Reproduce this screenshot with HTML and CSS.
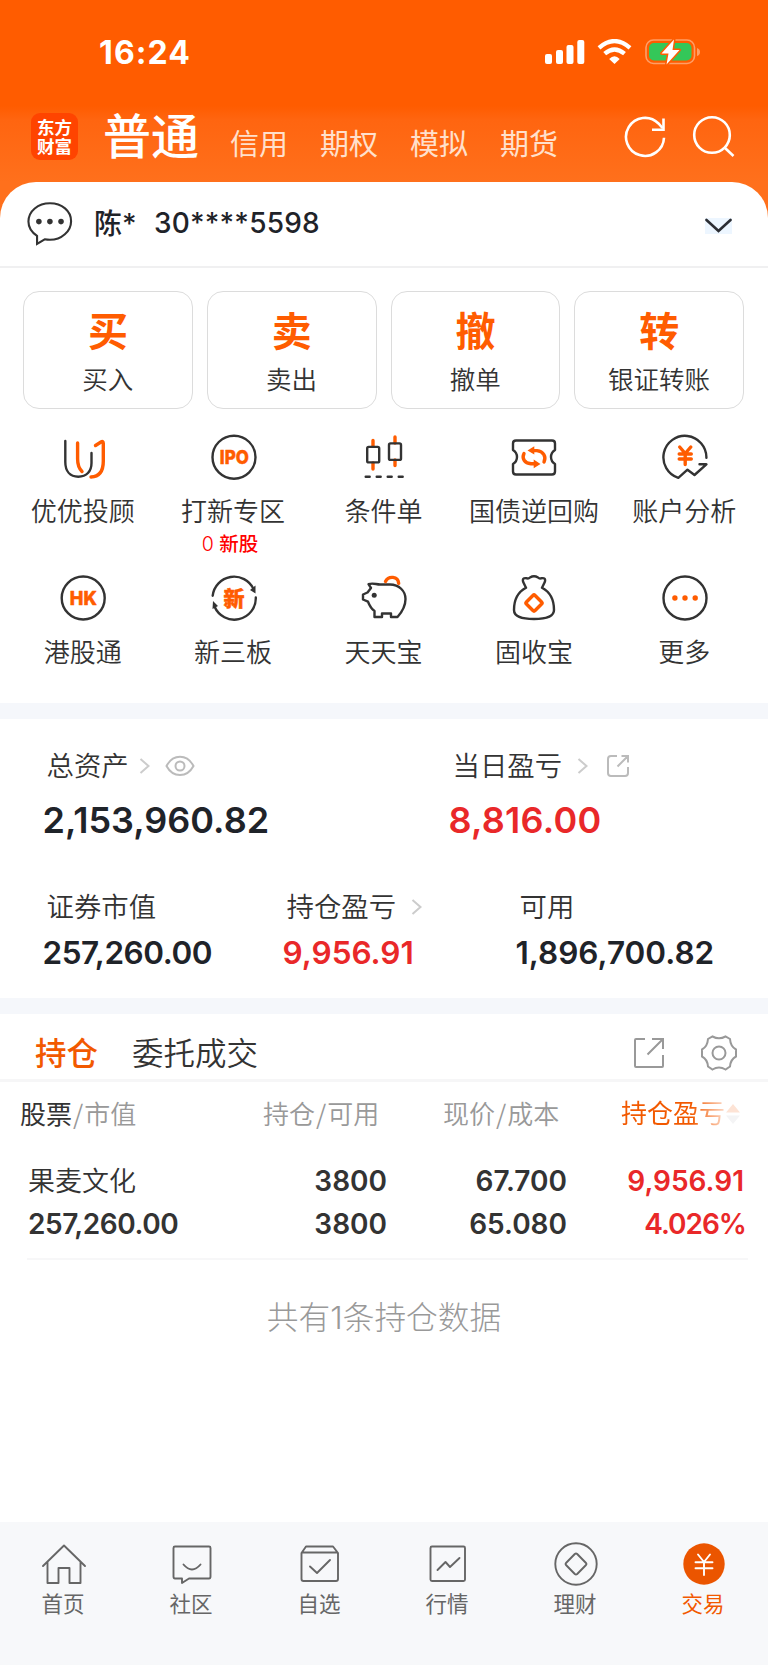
FILE: index.html
```html
<!DOCTYPE html>
<html lang="zh-CN">
<head>
  <meta charset="UTF-8">
  <meta name="viewport" content="width=device-width, initial-scale=1">
  <title>交易</title>
  <link rel="stylesheet" href="styles.css">
</head>
<body>
  <header>
    <div class="status-bar">
      <span class="time">16:24</span>
      <svg class="status-icons" width="156" height="26" viewBox="0 0 156 26">
        <g fill="#fff">
          <rect x="0" y="15" width="7" height="10" rx="2"/>
          <rect x="11" y="11" width="7" height="14" rx="2"/>
          <rect x="21.500" y="6" width="7" height="19" rx="2"/>
          <rect x="32.300" y="1" width="7" height="24" rx="2"/>
          <path d="M64.200 20 Q69.500 14.500 74.700 20 L69.500 25 Z"/>
        </g>
        <g fill="none" stroke="#fff" stroke-width="4.300">
          <path d="M54 8.800 Q69.500 -4.600 85 8.800"/>
          <path d="M59.700 14.700 Q69.500 6.300 79.500 14.700"/>
        </g>
        <rect x="101" y="1" width="48.500" height="23.500" rx="7.500" fill="none" stroke="#ff9e66" stroke-width="1.600"/>
        <path d="M152 9 Q155 10 155 13 Q155 16 152 17 Z" fill="#ff9e66"/>
        <rect x="104" y="4" width="42.500" height="17.500" rx="5" fill="#34c759"/>
        <path d="M129 .5 L116.500 14.500 H123.500 L121.500 25.500 L134.500 11 H127.500 Z" fill="#fff" stroke="#ff5c00" stroke-width="3" paint-order="stroke" stroke-linejoin="round"/>
      </svg>
    </div>
    <nav class="account-tabs">
      <div class="logo"><span>东方</span><span>财富</span></div>
      <a class="current" href="#">普通</a>
      <a href="#">信用</a>
      <a href="#">期权</a>
      <a href="#">模拟</a>
      <a href="#">期货</a>
      <svg class="header-icons" width="112" height="44" viewBox="0 0 112 44" fill="none" stroke="#fff" stroke-width="2.600">
        <path d="M41 22.700 A19 19 0 1 1 35.500 8.500 L39.500 13"/>
        <path d="M40.500 3.500 V14.700 H29"/>
        <circle cx="89" cy="20" r="17.800"/>
        <path d="M101.500 32.500 L110.500 41"/>
      </svg>
    </nav>
  </header>

  <main>
    <div class="account">
      <svg width="46" height="46" viewBox="0 0 48 48">
        <path d="M10.500 36.500 C4.500 32.500 1.500 27 1.500 21.500 C1.500 10.500 11.500 2.300 24 2.300 C36.500 2.300 46 10.500 46 21 C46 31.500 36 40.500 24 40.500 Q21 40.500 18.500 40 L10.500 44.700 Z" fill="none" stroke="#333" stroke-width="2.200"/>
        <g fill="#333"><circle cx="12.400" cy="21.500" r="2.900"/><circle cx="23.900" cy="21.500" r="2.900"/><circle cx="35.500" cy="21.500" r="2.900"/></g>
      </svg>
      <span class="owner">陈*</span>
      <span class="number">30****5598</span>
      <svg class="expand" width="27" height="16" viewBox="0 0 27 16">
        <path d="M1.500 2 L13.500 13 L25.500 2" fill="none" stroke="#2b2d33" stroke-width="2.600" stroke-linecap="round"/>
      </svg>
    </div>

    <div class="trade-cards">
      <a href="#"><b>买</b><span>买入</span></a>
      <a href="#"><b>卖</b><span>卖出</span></a>
      <a href="#"><b>撤</b><span>撤单</span></a>
      <a href="#"><b>转</b><span>银证转账</span></a>
    </div>

    <div class="shortcuts">
      <a href="#">
        <svg class="icon" viewBox="0 0 48 48">
          <path d="M6.300 8 V29 C6.300 38 11 43.700 19.300 43.700 C27.500 43.700 32.500 38.500 32.500 30 V20"/>
          <path class="hot" d="M18.600 10 V26 C18.600 32 20 35.500 23 38.500 M36.500 12.500 L42 9 Q44.300 7.600 44.300 10.500 V28 C44.300 37.500 41 43.700 32 44"/>
        </svg>
        <span>优优投顾</span>
      </a>
      <a href="#">
        <svg class="icon" viewBox="0 0 48 48">
          <circle cx="24" cy="24.200" r="21.500"/>
          <text x="24.300" y="31.300" textLength="29" lengthAdjust="spacingAndGlyphs">IPO</text>
        </svg>
        <span>打新专区</span>
        <em>0 <b>新股</b></em>
      </a>
      <a href="#">
        <svg class="icon" viewBox="0 0 48 48">
          <path class="hot" d="M13 7.500 V13 M13 30 V36 M35 4 V10 M35 27 V32.500"/>
          <rect x="7.200" y="13.900" width="12" height="15.500" rx="1.500"/>
          <rect x="29" y="10.400" width="12" height="16.500" rx="1.500"/>
          <path d="M5.700 43.700 H9.700 M16.700 43.700 H20.700 M27.700 43.700 H31.700 M38.700 43.700 H42.700"/>
        </svg>
        <span>条件单</span>
      </a>
      <a href="#">
        <svg class="icon" viewBox="0 0 48 48">
          <path d="M6 7.500 H42 Q45 7.500 45 10.500 V17 Q41 19.500 41 24 Q41 28.500 45 31 V38.500 Q45 41.500 42 41.500 H6 Q3 41.500 3 38.500 V31 Q7 28.500 7 24 Q7 19.500 3 17 V10.500 Q3 7.500 6 7.500 Z"/>
          <path class="hot" d="M23 17.600 H27 C33.500 18.500 36.500 23.500 34 29 M24 30.800 H21 C14.500 30 11.500 25.500 14 20.500"/>
          <path class="hot-fill" d="M17.500 17.400 L24.300 13.200 V21.600 Z M30.500 31 L23.700 26.600 V35.200 Z"/>
        </svg>
        <span>国债逆回购</span>
      </a>
      <a href="#">
        <svg class="icon" viewBox="0 0 48 48">
          <path d="M45.400 24.700 A21.500 21.500 0 1 0 17.300 44.800 L26.500 36.700 L33.500 42 L45.400 31.300 H38.500"/>
          <path class="hot" d="M18.700 14 L24.200 20.500 L29.800 14 M18.200 21 H30.300 M18.200 26 H30.300 M24.200 21 V31.500"/>
        </svg>
        <span>账户分析</span>
      </a>
      <a href="#">
        <svg class="icon" viewBox="0 0 48 48">
          <circle cx="24.200" cy="24" r="21.500"/>
          <text x="24.300" y="31" textLength="27" lengthAdjust="spacingAndGlyphs">HK</text>
        </svg>
        <span>港股通</span>
      </a>
      <a href="#">
        <svg class="icon" viewBox="0 0 48 48">
          <path d="M2.700 21.700 A21.500 21.500 0 0 1 43.500 15 M45.800 23.500 A21.500 21.500 0 0 1 4.500 32.500"/>
          <path class="dark-fill" d="M40 16 L45.500 11.500 V19.500 Z M2.500 35 L3 27 L8 32 Z"/>
          <text class="cjk" x="24" y="31.800">新</text>
        </svg>
        <span>新三板</span>
      </a>
      <a href="#">
        <svg class="icon" viewBox="0 0 48 48">
          <path d="M8.500 10.200 C13 8.500 16 10.500 20 10.500 H30 C39 10.500 45.500 17 45.500 25 C45.500 33 42 38 37.500 43 H31 V39.500 H22 V43 H14.500 V37 C11 34.500 9.500 31.500 8 27.700 L3 25.500 V20.500 L7.500 18.500 L11 14 Z"/>
          <circle class="dark-fill" cx="14.200" cy="21.300" r="2.500"/>
          <path class="hot" d="M25.500 7.500 C28.500 1.500 38 2 38.700 9.300"/>
        </svg>
        <span>天天宝</span>
      </a>
      <a href="#">
        <svg class="icon" viewBox="0 0 48 48">
          <path d="M16 13.800 L13.200 8 Q11.800 3.500 16.500 4.200 Q18.500 5 20 3.500 Q24 1 28 3.500 Q29.500 5 31.500 4.200 Q36.200 3.500 34.800 8 L32 13.800 C40 18 44 25 44 36 C44 42.500 37 45 24 45 C11 45 4 42.500 4 36 C4 25 8 18 16 13.800 Z"/>
          <rect class="hot" x="17.900" y="22.900" width="12.200" height="12.200" rx="1.500" transform="rotate(45 24 29)"/>
        </svg>
        <span>固收宝</span>
      </a>
      <a href="#">
        <svg class="icon" viewBox="0 0 48 48">
          <circle cx="24" cy="24" r="21.500"/>
          <g class="hot-fill"><circle cx="13.900" cy="24" r="2.700"/><circle cx="24" cy="24" r="2.700"/><circle cx="34.200" cy="24" r="2.700"/></g>
        </svg>
        <span>更多</span>
      </a>
    </div>

    <section class="assets">
      <div class="totals">
        <div>
          <p>总资产
            <svg class="arrow" width="11" height="18" viewBox="0 0 11 18"><path d="M1.500 2 L9.500 9 L1.500 16"/></svg>
            <svg class="eye" width="30" height="22" viewBox="0 0 30 22"><path d="M1.500 11 C8 -1.300 22 -1.300 28.500 11 C22 23 8 23 1.500 11 Z"/><circle cx="15" cy="11" r="4.500"/></svg>
          </p>
          <strong>2,153,960.82</strong>
        </div>
        <div>
          <p>当日盈亏
            <svg class="arrow wide" width="11" height="18" viewBox="0 0 11 18"><path d="M1.500 2 L9.500 9 L1.500 16"/></svg>
            <svg class="share" width="24" height="24" viewBox="0 0 24 24"><path d="M11 2 H5 Q2 2 2 5 V19 Q2 22 5 22 H19 Q22 22 22 19 V13 M15.500 2 H22 V8.500 M22 2 L11.500 12.500"/></svg>
          </p>
          <strong class="up loose">8,816.00</strong>
        </div>
      </div>
      <div class="details">
        <div><p>证券市值</p><strong class="tight">257,260.00</strong></div>
        <div>
          <p>持仓盈亏
            <svg class="arrow wide" width="11" height="18" viewBox="0 0 11 18"><path d="M1.500 2 L9.500 9 L1.500 16"/></svg>
          </p>
          <strong class="up">9,956.91</strong>
        </div>
        <div><p>可用</p><strong>1,896,700.82</strong></div>
      </div>
    </section>

    <section class="positions">
      <div class="position-tabs">
        <a class="current" href="#">持仓</a>
        <a href="#">委托成交</a>
        <svg width="32" height="32" viewBox="0 0 32 32"><path d="M12 2 H3 Q2 2 2 3 V29 Q2 30 3 30 H29 Q30 30 30 29 V18 M19 2 H30 V12 M30 2 L14.500 17.500"/></svg>
        <svg width="38" height="38" viewBox="0 0 38 38"><path d="M12.500 2.500 Q19 6 25.500 2.500 L30 5 Q30.500 12.500 36 15.500 V22.500 Q30.500 25.500 30 32.500 L25.500 35.500 Q19 31.500 12.500 35.500 L8 32.500 Q7.500 25.500 2 22.500 V15.500 Q7.500 12.500 8 5 Z"/><circle cx="19" cy="19" r="6.500"/></svg>
      </div>
      <div class="table-head">
        <span><b>股票</b><i>/</i>市值</span>
        <span>持仓<i>/</i>可用</span>
        <span>现价<i>/</i>成本</span>
        <span class="sort">持仓盈亏<svg width="16" height="20" viewBox="0 0 16 20"><path d="M8 0 L15 8.500 H1 Z" fill="#fde3d5"/><path d="M8 20 L15 11.500 H1 Z" fill="#f4f4f5"/></svg></span>
      </div>
      <div class="table-row">
        <div class="name">果麦文化</div>
        <div>3800</div>
        <div>67.700</div>
        <div class="up">9,956.91</div>
        <div class="tight">257,260.00</div>
        <div>3800</div>
        <div>65.080</div>
        <div class="up percent">4.026%</div>
      </div>
      <p class="count">共有1条持仓数据</p>
    </section>
  </main>

  <nav class="bottom-nav">
    <a href="#">
      <svg viewBox="0 0 46 46"><path d="M2 25 L23 4.500 L44 25 M6.500 21 V42 H17.500 V27 H28.500 V42 H39.500 V21"/></svg>
      <span>首页</span>
    </a>
    <a href="#">
      <svg viewBox="0 0 46 46"><path d="M6 5.500 H40 Q41.500 5.500 41.500 7 V35.500 Q41.500 37.500 40 37.500 H20 L13 42 V37.500 H6 Q4.500 37.500 4.500 35.500 V7 Q4.500 5.500 6 5.500 Z M14.500 23.500 Q23 33.500 31.500 23.500"/></svg>
      <span>社区</span>
    </a>
    <a href="#">
      <svg viewBox="0 0 46 46"><path d="M4.500 12 L9 5.500 H36 L41 12 V38 Q41 40 39 40 H6.500 Q4.500 40 4.500 38 Z M5 11.500 H40.500 M13 25.500 L20 32 L33 19"/></svg>
      <span>自选</span>
    </a>
    <a href="#">
      <svg viewBox="0 0 46 46"><rect x="5.500" y="5.500" width="34.500" height="34.500" rx="1.500"/><path d="M12.500 29 L20.500 21 L25 26 L34.500 17"/></svg>
      <span>行情</span>
    </a>
    <a href="#">
      <svg viewBox="0 0 46 46"><circle cx="23" cy="23" r="20.700"/><path d="M21.800 13 Q23 12 24.200 13 L33 22 Q34 23 33 24 L24.200 33 Q23 34 21.800 33 L13 24 Q12 23 13 22 Z"/></svg>
      <span>理财</span>
    </a>
    <a class="current" href="#">
      <svg viewBox="0 0 46 46"><circle cx="23" cy="23" r="20.700"/><path d="M17 13.500 L23 21 L29 13.500 M14.500 21.300 H31.500 M14.500 27.300 H31.500 M23 21 V34"/></svg>
      <span>交易</span>
    </a>
  </nav>
</body>
</html>
```

FILE: styles.css
```css
:root {
  --orange: #ff5c00;
  --red: #e92829;
  --text: #333;
  --dark: #1f2329;
  --muted: #999;
  --band: #f5f7fb;
}

* {
  box-sizing: border-box;
}

body {
  margin: 0;
  width: 768px;
  height: 1665px;
  font-family: Inter, "Noto Sans CJK SC", sans-serif;
  color: var(--text);
  background: #fff;
  display: flex;
  flex-direction: column;
  overflow: hidden;
}

a {
  color: inherit;
  text-decoration: none;
}

p {
  margin: 0;
}

header {
  height: 222px;
  background: linear-gradient(var(--orange) 106px, #ff6510 120px, #ff701c 182px);
  color: #fff;
}

.status-bar {
  height: 106px;
  padding: 32px 67px 0 99px;
  display: flex;
  justify-content: space-between;
}

.time {
  font-size: 32px;
  line-height: 41px;
  font-weight: 700;
  letter-spacing: 1.1px;
}

.status-icons {
  margin-top: 7px;
}

.account-tabs {
  display: flex;
  padding-left: 31px;
}

.account-tabs a {
  width: 90px;
  margin-top: 19px;
  font-size: 29px;
  line-height: 40px;
  color: #ffe0cc;
}

.account-tabs .current {
  width: 127px;
  margin: 6px 0 0 25px;
  font-size: 48px;
  line-height: 50px;
  font-weight: 500;
  color: #fff;
}

.logo {
  width: 47px;
  height: 47px;
  margin-top: 7px;
  padding-top: 5px;
  border-radius: 9px;
  background: #ff4400;
  display: flex;
  flex-direction: column;
  align-items: center;
  font-size: 17.500px;
  line-height: 19px;
  font-weight: 700;
}

.header-icons {
  margin: 9px 0 0 33px;
}

main {
  flex: 1;
  margin-top: -40px;
  border-radius: 36px 36px 0 0;
  background: #fff;
}

.account {
  height: 86px;
  padding: 0 36px 0 27px;
  border-bottom: 2px solid #f0f0f1;
  display: flex;
  align-items: center;
  font-size: 28px;
  line-height: 40px;
  font-weight: 500;
  color: var(--dark);
}

.owner {
  margin-left: 21px;
  width: 60px;
}

.number {
  margin-bottom: 2px;
  letter-spacing: .2px;
}

.expand {
  margin: 3px 0 0 auto;
  background: #edf6ff;
}

.trade-cards {
  padding: 23px 24px 0 23px;
  display: grid;
  grid-template-columns: repeat(4, 1fr);
  gap: 14px;
}

.trade-cards a {
  height: 118px;
  border: 1px solid #dcdcdc;
  border-radius: 16px;
  display: flex;
  flex-direction: column;
  align-items: center;
}

.trade-cards b {
  margin: 18px 0 11px;
  font-size: 40px;
  line-height: 44px;
  font-weight: 700;
  color: var(--orange);
}

.trade-cards span {
  font-size: 25.500px;
  line-height: 30px;
  font-weight: 350;
}

.shortcuts {
  height: 294px;
  padding: 24px 8px 0;
  display: grid;
  grid-template-columns: repeat(5, 1fr);
  grid-template-rows: 141px 130px;
}

.shortcuts a {
  display: flex;
  flex-direction: column;
  align-items: center;
  font-size: 26px;
  line-height: 30px;
  font-weight: 350;
  white-space: nowrap;
}

.shortcuts a > span {
  margin: 16px 1px 0 0;
}

.shortcuts em {
  margin: 7px 7px 0 0;
  font-size: 19.500px;
  line-height: 20px;
  font-style: normal;
  color: #f00;
}

.shortcuts em b {
  font-weight: 500;
}

.icon {
  width: 48px;
  height: 48px;
  fill: none;
  stroke: #333;
  stroke-width: 2.400;
  stroke-linejoin: round;
  stroke-linecap: round;
}

.icon .hot {
  stroke: var(--orange);
  stroke-width: 3.400;
}

.icon .hot-fill {
  fill: var(--orange);
  stroke: none;
}

.icon .dark-fill {
  fill: #333;
  stroke: none;
}

.icon text {
  fill: var(--orange);
  stroke: var(--orange);
  stroke-width: .5;
  font-size: 19px;
  font-weight: 800;
  text-anchor: middle;
}

.icon .cjk {
  font-size: 21px;
}

.assets {
  height: 311px;
  padding: 30px 0 0 42.500px;
  border: solid var(--band);
  border-width: 16px 0;
}

.assets p {
  height: 34px;
  padding-left: 4px;
  display: flex;
  align-items: center;
  font-size: 27.400px;
  line-height: 34px;
  font-weight: 350;
}

.assets svg {
  fill: none;
  stroke: #bbb;
  stroke-width: 2;
}

.assets .arrow {
  margin-left: 10px;
  stroke: #ccc;
}

.assets .wide {
  margin-left: 15px;
}

.assets .eye {
  margin-left: 15px;
}

.assets .share {
  margin-left: 18px;
}

.assets strong {
  display: block;
  font-weight: 600;
  color: var(--dark);
}

.assets .up,
.table-row .up {
  color: var(--red);
}

.assets .tight,
.table-row .tight {
  letter-spacing: -.45px;
}

.assets .loose {
  letter-spacing: .25px;
}

.totals {
  height: 141px;
  display: grid;
  grid-template-columns: 406px 1fr;
}

.totals strong {
  margin-top: 15px;
  font-size: 36px;
  line-height: 44px;
}

.details {
  display: grid;
  grid-template-columns: 240px 233px 1fr;
}

.details strong {
  margin-top: 9px;
  font-size: 31.500px;
  line-height: 40px;
}

.position-tabs {
  height: 68px;
  padding: 9px 30px 0 35px;
  border-bottom: 3px solid #f6f6f7;
  display: flex;
  align-items: center;
  font-size: 31.500px;
  line-height: 40px;
  font-weight: 350;
}

.position-tabs a {
  margin-top: 5px;
}

.position-tabs .current {
  width: 97px;
  font-weight: 500;
  color: #f25900;
}

.position-tabs svg {
  margin-top: 3px;
  fill: none;
  stroke: #999;
  stroke-width: 2;
}

.position-tabs a + svg {
  margin: 3px 35px 0 auto;
}

.table-head {
  height: 66px;
  padding: 11px 26px 0 20px;
  display: grid;
  grid-template-columns: 243px 180px 178px 1fr;
  font-size: 26px;
  line-height: 40px;
  font-weight: 350;
  color: var(--muted);
  white-space: nowrap;
}

.table-head b {
  font-weight: 400;
  color: var(--text);
}

.table-head i {
  font-family: "Noto Sans CJK SC", sans-serif;
  font-style: normal;
  margin: 0 1px;
}

.sort {
  height: 42px;
  display: flex;
  align-items: center;
  font-weight: 400;
  color: transparent;
  background: linear-gradient(90deg, #f25900 70px, #fcd5c0 103px);
  background-clip: text;
}

.table-row {
  height: 112px;
  margin: 0 20px 0 27px;
  padding: 12px 4px 0 1px;
  border-bottom: 2px solid #f7f7f8;
  display: grid;
  grid-template-columns: 180px 179px 180px 1fr;
  grid-auto-rows: 43px;
  font-size: 28px;
  line-height: 43px;
  font-weight: 600;
  text-align: right;
}

.table-row div:nth-child(4n + 1) {
  text-align: left;
}

.table-row .name {
  font-size: 27px;
  font-weight: 350;
}

.table-row .percent {
  margin-right: -2px;
  letter-spacing: -1px;
}

.count {
  margin-top: 38px;
  text-align: center;
  font-size: 31.700px;
  line-height: 40px;
  font-weight: 300;
  color: var(--muted);
}

.bottom-nav {
  height: 143px;
  padding-top: 19px;
  background: #f7f8fa;
  display: grid;
  grid-template-columns: repeat(6, 128px);
}

.bottom-nav a {
  display: flex;
  flex-direction: column;
  align-items: center;
  font-size: 21.500px;
  line-height: 30px;
  color: #666;
}

.bottom-nav svg {
  width: 46px;
  height: 46px;
  margin-bottom: 2px;
  fill: none;
  stroke: #666;
  stroke-width: 1.900;
  stroke-linejoin: round;
  stroke-linecap: round;
}

.bottom-nav span {
  margin-right: 2px;
}

.bottom-nav .current {
  color: #f25900;
}

.bottom-nav .current circle {
  fill: #eb5500;
  stroke: none;
}

.bottom-nav .current path {
  stroke: #fff;
}
```
